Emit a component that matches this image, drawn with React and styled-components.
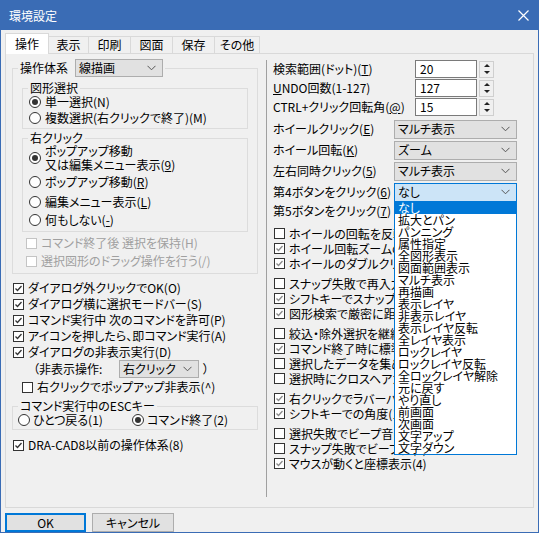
import React from "react";
import styled, { createGlobalStyle } from "styled-components";

const GlobalStyle = createGlobalStyle`
  html, body { margin: 0; padding: 0; background: #fff; }
  body { font-family: "Noto Sans CJK JP", "Noto Sans", sans-serif; font-size: 12px; }
`;

const Window = styled.div`
  width: 539px;
  height: 533px;
  box-sizing: border-box;
  border: 1px solid #3a6cb5;
  border-top: 0;
  background: #f0f0f0;
  display: flex;
  flex-direction: column;
  font-family: "Noto Sans CJK JP", sans-serif;
  font-size: 12px;
  font-feature-settings: "palt";
  color: #000;
`;

const TitleBar = styled.div`
  height: 30px;
  flex: none;
  background: #3a6cb5;
  color: #fff;
  display: flex;
  align-items: center;
  justify-content: space-between;
  padding: 0 9px 0 8px;
  font-size: 12px;
`;

const Body = styled.div`
  display: flex;
  flex-direction: column;
  padding: 3px 4px 0;
`;

const TabRow = styled.div`
  display: flex;
  align-items: flex-end;
  height: 20px;
`;

const Tab = styled.div`
  width: ${({ $w }) => $w}px;
  box-sizing: border-box;
  height: ${({ $active }) => ($active ? 21 : 17)}px;
  margin-bottom: ${({ $active }) => ($active ? -1 : 0)}px;
  margin-left: ${({ $first }) => ($first ? 0 : -1)}px;
  border: 1px solid #d9d9d9;
  border-bottom: 0;
  background: ${({ $active }) => ($active ? "#fff" : "#f0f0f0")};
  position: relative;
  z-index: ${({ $active }) => ($active ? 2 : 1)};
  display: flex;
  align-items: center;
  justify-content: center;
  line-height: 14px;
`;

const Panel = styled.div`
  height: 455px;
  box-sizing: border-box;
  border: 1px solid #d9d9d9;
  background: #f0f0f0;
  display: flex;
  padding: 5px 0 0 6px;
`;

const LeftCol = styled.div`
  width: 246px;
  flex: none;
  display: flex;
  flex-direction: column;
`;

const RightCol = styled.div`
  flex: 1;
  margin: 1px 0 0 8px;
  height: 437px;
  border-left: 1px solid #a0a0a0;
  padding-left: 6px;
  display: flex;
  flex-direction: column;
  white-space: nowrap;
`;

const Group = styled.fieldset`
  margin: ${({ $mt }) => $mt || 0}px 0 0;
  border: 1px solid #dcdcdc;
  padding: ${({ $pad }) => $pad};
  min-width: 0;
  display: flex;
  flex-direction: column;
`;

const Legend = styled.legend`
  padding: 0 2px;
  margin-left: ${({ $ml }) => $ml}px;
  line-height: 12px;
  display: flex;
  align-items: center;
  gap: 7px;
`;

const Combo = styled.div`
  width: ${({ $w }) => $w}px;
  height: ${({ $h }) => $h || 18}px;
  box-sizing: border-box;
  border: 1px solid ${({ $focus }) => ($focus ? "#0078d7" : "#adadad")};
  background: ${({ $focus }) => ($focus ? "#cce4f7" : "#e1e1e1")};
  display: flex;
  align-items: center;
  justify-content: space-between;
  padding: 0 6px 0 3px;
  line-height: 14px;
  position: relative;
  flex: none;
`;

const Row = styled.div`
  display: flex;
  align-items: center;
  gap: 4px;
  height: ${({ $h }) => $h}px;
  margin-top: ${({ $mt }) => $mt || 0}px;
  padding-left: ${({ $pl }) => $pl || 0}px;
  color: ${({ $disabled }) => ($disabled ? "#a0a0a0" : "#000")};
  line-height: 14px;
  flex: none;
`;

const Box = styled.span`
  width: 11px;
  height: 11px;
  box-sizing: border-box;
  border: 1px solid ${({ $disabled }) => ($disabled ? "#c4c4c4" : "#333")};
  background: #fff;
  display: flex;
  align-items: center;
  justify-content: center;
  flex: none;
`;

const Circle = styled.span`
  width: 12px;
  height: 12px;
  border-radius: 50%;
  box-sizing: border-box;
  border: 1px solid #333;
  background: #fff;
  display: flex;
  align-items: center;
  justify-content: center;
  flex: none;
  &::after {
    content: "";
    width: 6px;
    height: 6px;
    border-radius: 50%;
    background: #333;
    display: ${({ $on }) => ($on ? "block" : "none")};
  }
`;

const TwoLine = styled.span`
  line-height: 13px;
`;

const RadioItem = styled.span`
  display: flex;
  align-items: center;
  gap: 3px;
  width: ${({ $w }) => ($w ? `${$w}px` : "auto")};
`;

const InputRow = styled.div`
  display: flex;
  align-items: center;
  height: 18px;
  margin-top: ${({ $mt }) => $mt || 0}px;
`;

const Label = styled.span`
  width: ${({ $w }) => $w}px;
  flex: none;
  line-height: 14px;
`;

const Input = styled.div`
  width: 62px;
  height: 18px;
  box-sizing: border-box;
  border: 1px solid #7a7a7a;
  background: #fff;
  padding-left: 4px;
  display: flex;
  align-items: center;
  line-height: 14px;
`;

const Spinner = styled.div`
  width: 15px;
  height: 17px;
  margin-left: 2px;
  box-sizing: border-box;
  border: 1px solid #cfcfcf;
  background: #f0f0f0;
  display: flex;
  flex-direction: column;
  align-items: center;
  justify-content: space-around;
`;

const Arrow = styled.span`
  width: 0;
  height: 0;
  border-left: 3px solid transparent;
  border-right: 3px solid transparent;
  ${({ $down }) => ($down ? "border-top: 3px solid #222;" : "border-bottom: 3px solid #222;")}
`;

const List = styled.div`
  position: absolute;
  top: 100%;
  left: -1px;
  width: 123px;
  box-sizing: border-box;
  border: 1px solid #0078d7;
  background: #fff;
  z-index: 5;
  display: flex;
  flex-direction: column;
`;

const ListItem = styled.div`
  height: 12px;
  line-height: 12px;
  padding-left: 3px;
  overflow: visible;
  background: ${({ $sel }) => ($sel ? "#0078d7" : "transparent")};
  color: ${({ $sel }) => ($sel ? "#fff" : "#000")};
`;

const ChecksBlock = styled.div`
  display: flex;
  flex-direction: column;
  margin-top: ${({ $mt }) => $mt}px;
`;

const ButtonRow = styled.div`
  display: flex;
  gap: 6px;
  margin-top: 5px;
`;

const Button = styled.div`
  width: ${({ $w }) => $w}px;
  height: 19px;
  box-sizing: border-box;
  border: ${({ $def }) => ($def ? "2px solid #0078d7" : "1px solid #adadad")};
  background: #e1e1e1;
  display: flex;
  align-items: center;
  justify-content: center;
  line-height: 14px;
`;

const Chevron = () => (
  <svg width="9" height="6" viewBox="0 0 9 6">
    <polyline points="0.5,0.8 4.5,4.8 8.5,0.8" fill="none" stroke="#555" strokeWidth="1" />
  </svg>
);

const Check = ({ checked, dim, disabled }) => (
  <Box $disabled={disabled}>
    {checked && (
      <svg width="9" height="9" viewBox="0 0 9 9">
        <polyline points="1.5,4.5 3.5,6.5 7.5,2" fill="none" stroke={dim ? "#8a8a8a" : "#333"} strokeWidth="1.3" />
      </svg>
    )}
  </Box>
);

const CheckRow = ({ checked, children, h = 16, mt, pl = 1, dim, disabled }) => (
  <Row $h={h} $mt={mt} $pl={pl} $disabled={disabled}>
    <Check checked={checked} dim={dim} disabled={disabled} />
    <span>{children}</span>
  </Row>
);

const RadioRow = ({ on, children, h = 16, pl = 3 }) => (
  <Row $h={h} $pl={pl}>
    <Circle $on={on} />
    <span>{children}</span>
  </Row>
);

const tabs = [
  ["操作", 44],
  ["表示", 41],
  ["印刷", 43],
  ["図面", 43],
  ["保存", 43],
  ["その他", 46],
];

const listItems = [
  "なし", "拡大とパン", "パンニング", "属性指定", "全図形表示", "図面範囲表示", "マルチ表示",
  "再描画", "表示レイヤ", "非表示レイヤ", "表示レイヤ反転", "全レイヤ表示", "ロックレイヤ",
  "ロックレイヤ反転", "全ロックレイヤ解除", "元に戻す", "やり直し", "前画面", "次画面",
  "文字アップ", "文字ダウン",
];

const rightChecks = [
  [
    ["ホイールの回転を反転(B)", false],
    ["ホイール回転ズームの中心(Z)", true],
    ["ホイールのダブルクリック(W)", true],
  ],
  [
    ["スナップ失敗で再入力(N)", false],
    ["シフトキーでスナップ切替(F)", true],
    ["図形検索で厳密に距離判定(G)", true],
  ],
  [
    ["絞込・除外選択を継続(J)", false],
    ["コマンド終了時に標準に戻る(Y)", true],
    ["選択したデータを集めて表示(Q)", false],
    ["選択時にクロスヘアカーソル(X)", false],
  ],
  [
    ["右クリックでラバーバンド(V)", true],
    ["シフトキーでの角度(15度)(I)", true],
  ],
  [
    ["選択失敗でビープ音(1)", false],
    ["スナップ失敗でビープ音(2)", false],
    ["マウスが動くと座標表示(4)", true],
  ],
];

export default function App() {
  return (
    <Window>
      <GlobalStyle />
      <TitleBar>
        <span>環境設定</span>
        <svg width="11" height="11" viewBox="0 0 11 11">
          <path d="M0.5 0.5 L10.5 10.5 M10.5 0.5 L0.5 10.5" stroke="#fff" strokeWidth="1.2" />
        </svg>
      </TitleBar>
      <Body>
        <TabRow>
          {tabs.map(([t, w], i) => (
            <Tab key={t} $w={w} $first={i === 0} $active={i === 0}>
              {t}
            </Tab>
          ))}
        </TabRow>
        <Panel>
          <LeftCol>
            <Group $pad="5px 9px 3px 9px">
              <Legend $ml={-4}>
                <span>操作体系</span>
                <Combo $w={88}>
                  <span>線描画</span>
                  <Chevron />
                </Combo>
              </Legend>
              <Group $pad="0 3px 2px 3px">
                <Legend $ml={2}>図形選択</Legend>
                <RadioRow on>単一選択(N)</RadioRow>
                <RadioRow>複数選択(右クリックで終了)(M)</RadioRow>
              </Group>
              <Group $mt={3} $pad="0 3px 3px 3px">
                <Legend $ml={2}>右クリック</Legend>
                <RadioRow on h={28}>
                  <TwoLine>
                    ポップアップ移動
                    <br />
                    又は編集メニュー表示(<u>9</u>)
                  </TwoLine>
                </RadioRow>
                <RadioRow h={20}>ポップアップ移動(<u>R</u>)</RadioRow>
                <RadioRow h={19}>編集メニュー表示(<u>L</u>)</RadioRow>
                <RadioRow h={17}>何もしない(<u>-</u>)</RadioRow>
              </Group>
              <CheckRow disabled h={18} mt={2} pl={4}>
                コマンド終了後 選択を保持(H)
              </CheckRow>
              <CheckRow disabled h={18} pl={4}>
                選択図形のドラッグ操作を行う(/)
              </CheckRow>
            </Group>
            <CheckRow checked mt={6}>ダイアログ外クリックでOK(O)</CheckRow>
            <CheckRow checked>ダイアログ横に選択モードバー(S)</CheckRow>
            <CheckRow checked>コマンド実行中 次のコマンドを許可(P)</CheckRow>
            <CheckRow checked>アイコンを押したら、即コマンド実行(A)</CheckRow>
            <CheckRow checked>ダイアログの非表示実行(D)</CheckRow>
            <Row $h={18} $pl={21}>
              <Label $w={82}>（非表示操作:</Label>
              <Combo $w={80}>
                <span>右クリック</span>
                <Chevron />
              </Combo>
              <span>）</span>
            </Row>
            <CheckRow h={18} pl={10}>右クリックでポップアップ非表示(^)</CheckRow>
            <Group $mt={4} $pad="0 4px 1px 4px">
              <Legend $ml={1}>コマンド実行中のESCキー</Legend>
              <Row $h={16} $pl={1}>
                <RadioItem $w={110}>
                  <Circle />
                  <span>ひとつ戻る(1)</span>
                </RadioItem>
                <RadioItem>
                  <Circle $on />
                  <span>コマンド終了(2)</span>
                </RadioItem>
              </Row>
            </Group>
            <CheckRow checked mt={7}>DRA-CAD8以前の操作体系(8)</CheckRow>
          </LeftCol>
          <RightCol>
            <InputRow>
              <Label $w={142}>検索範囲(ドット)(<u>T</u>)</Label>
              <Input>20</Input>
              <Spinner><Arrow /><Arrow $down /></Spinner>
            </InputRow>
            <InputRow $mt={1}>
              <Label $w={142}><u>U</u>NDO回数(1-127)</Label>
              <Input>127</Input>
              <Spinner><Arrow /><Arrow $down /></Spinner>
            </InputRow>
            <InputRow $mt={1}>
              <Label $w={142}>CTRL+クリック回転角(<u>@</u>)</Label>
              <Input>15</Input>
              <Spinner><Arrow /><Arrow $down /></Spinner>
            </InputRow>
            <InputRow $mt={4}>
              <Label $w={121}>ホイールクリック(<u>E</u>)</Label>
              <Combo $w={123} $h={19}><span>マルチ表示</span><Chevron /></Combo>
            </InputRow>
            <InputRow $mt={3}>
              <Label $w={121}>ホイール回転(<u>K</u>)</Label>
              <Combo $w={123} $h={19}><span>ズーム</span><Chevron /></Combo>
            </InputRow>
            <InputRow $mt={3}>
              <Label $w={121}>左右同時クリック(<u>5</u>)</Label>
              <Combo $w={123} $h={19}><span>マルチ表示</span><Chevron /></Combo>
            </InputRow>
            <InputRow $mt={3}>
              <Label $w={121}>第4ボタンをクリック(<u>6</u>)</Label>
              <Combo $w={123} $h={19} $focus>
                <span>なし</span>
                <Chevron />
                <List>
                  {listItems.map((it, i) => (
                    <ListItem key={it} $sel={i === 0}>{it}</ListItem>
                  ))}
                </List>
              </Combo>
            </InputRow>
            <Row $h={15} $mt={2}>
              <span>第5ボタンをクリック(<u>7</u>)</span>
            </Row>
            {rightChecks.map((grp, gi) => (
              <ChecksBlock key={gi} $mt={gi === 0 ? 8 : 5}>
                {grp.map(([t, c]) => (
                  <CheckRow key={t} checked={c} h={15} dim>
                    {t}
                  </CheckRow>
                ))}
              </ChecksBlock>
            ))}
          </RightCol>
        </Panel>
        <ButtonRow>
          <Button $w={81} $def>OK</Button>
          <Button $w={82}>キャンセル</Button>
        </ButtonRow>
      </Body>
    </Window>
  );
}
